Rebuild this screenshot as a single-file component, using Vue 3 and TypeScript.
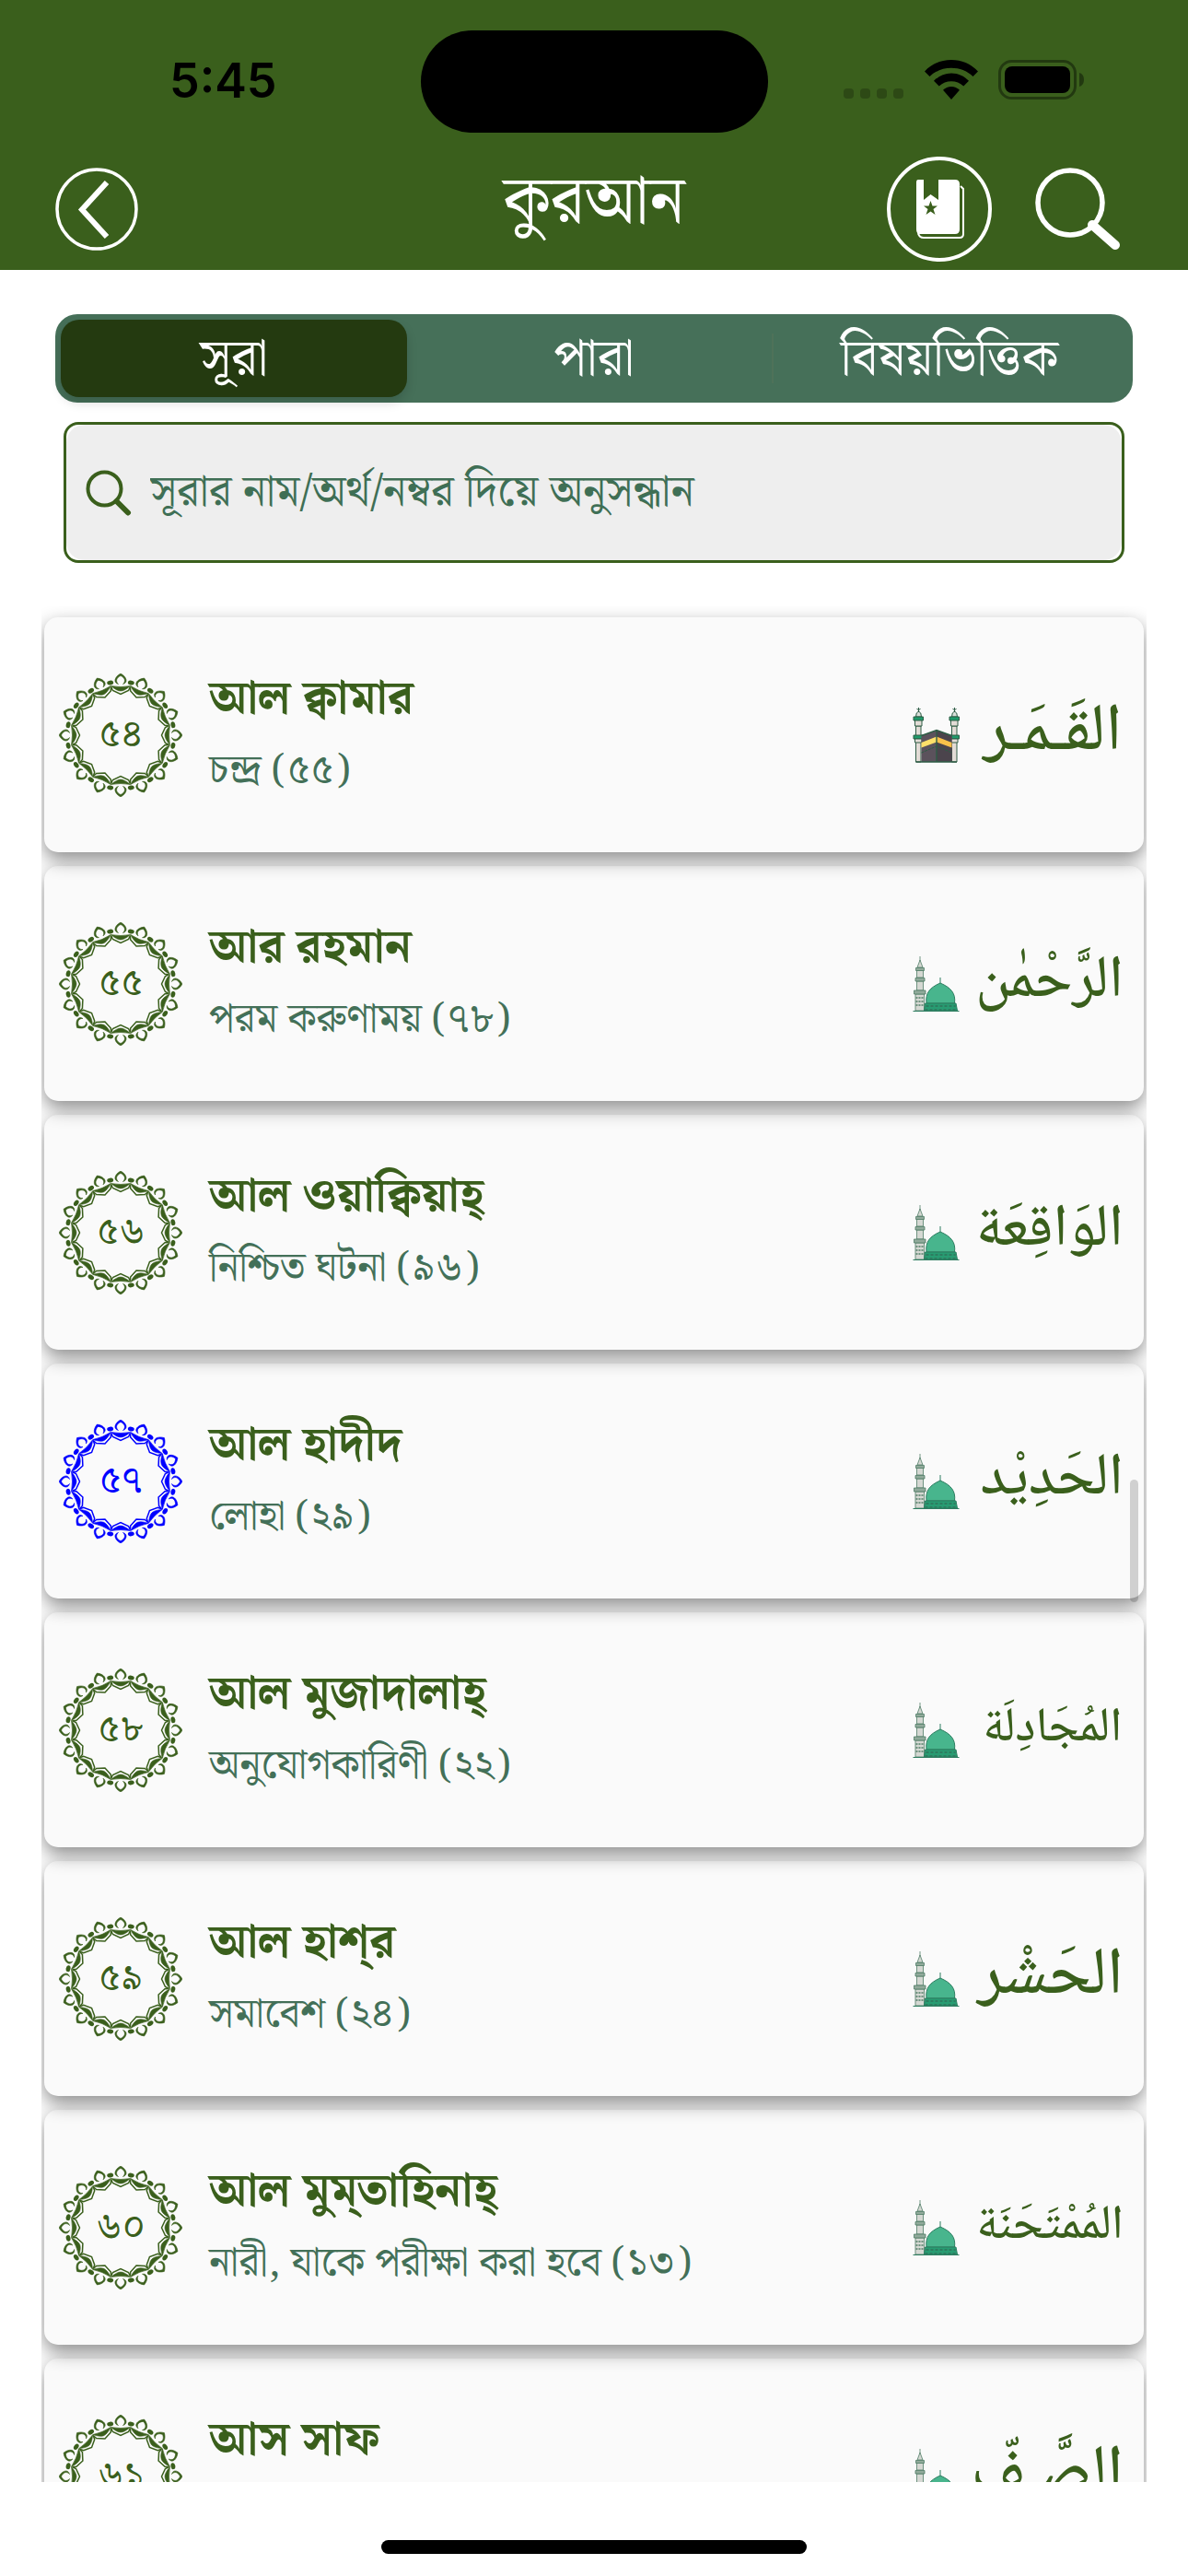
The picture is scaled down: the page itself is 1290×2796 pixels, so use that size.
<script setup lang="ts">
import { ref } from 'vue'

interface Sura {
  number: string
  name: string
  meaning?: string
  arabic: string
  arabicSize: 'small' | 'medium' | 'large'
  place: 'makkah' | 'madinah'
  current?: boolean
}

const tabs = ['সূরা', 'পারা', 'বিষয়ভিত্তিক']
const activeTab = ref(0)
const query = ref('')

const suras: Sura[] = [
  { number: '৫৪', name: 'আল ক্বামার', meaning: 'চন্দ্র (৫৫)', arabic: 'القَـمَـر', arabicSize: 'large', place: 'makkah' },
  { number: '৫৫', name: 'আর রহমান', meaning: 'পরম করুণাময় (৭৮)', arabic: 'الرَّحْمٰن', arabicSize: 'medium', place: 'madinah' },
  { number: '৫৬', name: 'আল ওয়াক্বিয়াহ্', meaning: 'নিশ্চিত ঘটনা (৯৬)', arabic: 'الوَاقِعَة', arabicSize: 'medium', place: 'madinah' },
  { number: '৫৭', name: 'আল হাদীদ', meaning: 'লোহা (২৯)', arabic: 'الحَدِيْد', arabicSize: 'medium', place: 'madinah', current: true },
  { number: '৫৮', name: 'আল মুজাদালাহ্', meaning: 'অনুযোগকারিণী (২২)', arabic: 'المُجَادِلَة', arabicSize: 'small', place: 'madinah' },
  { number: '৫৯', name: 'আল হাশ্‌র', meaning: 'সমাবেশ (২৪)', arabic: 'الحَشْر', arabicSize: 'large', place: 'madinah' },
  { number: '৬০', name: 'আল মুম্‌তাহিনাহ্', meaning: 'নারী, যাকে পরীক্ষা করা হবে (১৩)', arabic: 'المُمْتَحَنَة', arabicSize: 'small', place: 'madinah' },
  { number: '৬১', name: 'আস সাফ', arabic: 'الصَّـفّ', arabicSize: 'large', place: 'madinah' },
]

const petals = Array.from({ length: 16 }, (_, i) => i * 22.5)
</script>

<template>
  <div class="app">
    <header class="top">
      <div class="status">
        <time class="clock">5:45</time>
        <div class="island"></div>
        <div class="signals">
          <svg class="dots" width="66" height="12" viewBox="0 0 66 12" aria-hidden="true">
            <rect v-for="i in 4" :key="i" :x="(i - 1) * 18" y="0" width="11" height="11" rx="4" />
          </svg>
          <svg width="58" height="43" viewBox="0 0 58 43" aria-hidden="true">
            <path d="M29 0C40 0 50 4 58 12.500L52.500 18C46 11.800 38 8.800 29 8.800S12 11.800 5.500 18L0 12.500C8 4 18 0 29 0Z" />
            <path d="M29 14.500C36.500 14.500 42.800 17.500 48 22.800L42.300 28.500C38.500 25 34 23.200 29 23.200S19.500 25 15.700 28.500L10 22.800C15.200 17.500 21.500 14.500 29 14.500Z" />
            <path d="M29 29C32.500 29 35.500 30.300 38 32.800L29 43L20 32.800C22.500 30.300 25.500 29 29 29Z" />
          </svg>
          <svg width="94" height="43" viewBox="0 0 94 43" aria-hidden="true">
            <rect x="1.500" y="1.500" width="82" height="40" rx="13" fill="none" stroke="#000" stroke-opacity=".4" stroke-width="3" />
            <rect x="7" y="7" width="71" height="29" rx="8" />
            <path d="M88 14C91.500 15 93 18 93 21.500S91.500 28 88 29Z" fill-opacity=".4" />
          </svg>
        </div>
      </div>

      <div class="nav">
        <button class="icon-button back" type="button" aria-label="Back">
          <svg width="90" height="90" viewBox="0 0 90 90" fill="none" stroke="#fff">
            <circle cx="45" cy="45" r="43" stroke-width="3.500" />
            <path d="M56 16L29 45.500L56 75" stroke-width="6" />
          </svg>
        </button>
        <h1>কুরআন</h1>
        <div class="actions">
          <button class="icon-button" type="button" aria-label="Bookmarks">
            <svg width="114" height="114" viewBox="0 0 114 114">
              <circle cx="57" cy="57" r="55" fill="none" stroke="#fff" stroke-width="4" />
              <path d="M80 32L83 35V84Q83 88 79 88H40Q35 88 34 83" fill="none" stroke="#fff" stroke-width="2" />
              <path d="M34 25H40V47L47.500 41L56 47V25H74Q79 25 79 30V79Q79 84 74 84H36Q32 84 32 79V28Q32 25 34 25Z" fill="#fff" />
              <path d="M47.500 48L49.500 53.500H55L50.500 57L52.500 63L47.500 59.500L42.500 63L44.500 57L40 53.500H45.500Z" fill="#3a5f1c" />
            </svg>
          </button>
          <button class="icon-button" type="button" aria-label="Search">
            <svg width="94" height="90" viewBox="0 0 94 90" fill="none" stroke="#fff">
              <circle cx="38" cy="38" r="35" stroke-width="5.500" />
              <path d="M62 62L87 84" stroke-width="10" stroke-linecap="round" />
            </svg>
          </button>
        </div>
      </div>
    </header>

    <main class="content">
      <nav class="segments">
        <button
          v-for="(tab, i) in tabs"
          :key="tab"
          type="button"
          class="segment"
          :class="{ active: activeTab === i, divided: i === 2 && activeTab === 0 }"
          @click="activeTab = i"
        >{{ tab }}</button>
      </nav>

      <div class="search">
        <label class="search-inner">
          <svg width="50" height="50" viewBox="0 0 50 50" fill="none" stroke="#3a5f1c" aria-hidden="true">
            <circle cx="20.500" cy="20.500" r="18" stroke-width="4" />
            <path d="M33.500 34L46 46.500" stroke-width="6" stroke-linecap="round" />
          </svg>
          <input v-model="query" type="text" aria-label="অনুসন্ধান" placeholder="সূরার নাম/অর্থ/নম্বর দিয়ে অনুসন্ধান" />
        </label>
      </div>

      <div class="list-frame">
        <ul class="list">
          <li
            v-for="(sura, i) in suras"
            :key="sura.number"
            class="card"
            :style="{ zIndex: suras.length - i }"
          >
            <div class="badge" :class="{ current: sura.current }">
              <svg viewBox="-67 -67 134 134" fill="none" stroke="currentColor" aria-hidden="true">
                <g v-for="angle in petals" :key="angle" :transform="`rotate(${angle})`">
                  <path d="M-2.500 -55.500C-8.500 -57 -6.500 -63.500 0 -67C6.500 -63.500 8.500 -57 2.500 -55.500C6 -58.500 4.500 -62.500 0 -64.500C-4.500 -62.500 -6 -58.500 -2.500 -55.500Z" fill="currentColor" stroke-width=".600" />
                  <path d="M-10.500 -53.500Q0 -51.500 10.500 -53.500Q4 -48 0 -48Q-4 -48 -10.500 -53.500Z" fill="currentColor" stroke-width=".600" />
                  <path d="M-10.500 -52.500L-8.500 -48.500L0 -44.500L8.500 -48.500L10.500 -52.500" stroke-width="1.500" />
                  <ellipse cx="0" cy="-58" rx="3.500" ry="2.400" transform="rotate(11.250)" fill="currentColor" stroke="none" />
                </g>
              </svg>
              <span>{{ sura.number }}</span>
            </div>
            <div class="text">
              <h2>{{ sura.name }}</h2>
              <p>{{ sura.meaning }}</p>
            </div>
            <svg v-if="sura.place === 'makkah'" class="place" viewBox="0 0 50 60" aria-hidden="true">
              <g stroke="#2e5c45" stroke-width="1">
                <path d="M3 20H8.500V59H3ZM42 20H47.500V59H42Z" fill="#e3dcd6" />
                <path d="M2 12H9.500V20H2ZM41 12H48.500V20H41Z" fill="#e3dcd6" />
                <path d="M3 10Q3 5 6 4Q9 5 9 10ZM42 10Q42 5 45 4Q48 5 48 10Z" fill="#d9ded9" />
                <path d="M.500 10H11V14H.500ZM39.500 10H50V14H39.500ZM.500 30H11V34H.500ZM39.500 30H50V34H39.500Z" fill="#1f9a6b" />
                <path d="M2 34H9.500V38H2ZM41 34H48.500V38H41Z" fill="#e3dcd6" />
                <path d="M6 5V0M45 5V0M4 1L6 3L8 1M43 1L45 3L47 1" fill="none" />
              </g>
              <path d="M25.500 24.500L42 30.500V59H9V30.500Z" fill="#5b525c" />
              <path d="M25.500 24.500L42 30.500V59H25.500Z" fill="#4b444c" />
              <path d="M9 38L25.500 31.500V37.500L9 43.500Z" fill="#ffe06a" />
              <path d="M25.500 31.500L42 38V43.500L25.500 37.500Z" fill="#f9c14a" />
              <path d="M9 49L25.500 42L42 49" fill="none" stroke="#2e5c45" stroke-dasharray="3 1" />
              <path d="M9 30.500L25.500 24.500L42 30.500M25.500 24.500V59M3 59H47.500" fill="none" stroke="#2e5c45" stroke-width="1.400" />
            </svg>
            <svg v-else class="place" viewBox="0 0 50 60" aria-hidden="true">
              <g fill="#d5d8d3" stroke="#4f7c66" stroke-width=".800">
                <path d="M7.500 5V0" />
                <path d="M4.500 12L7.500 4L10.500 12ZM4 15H11V23H4ZM4 27H11V37H4ZM2.500 41H12V59H2.500Z" />
                <path d="M3 12.500H12V15.500H3ZM2.500 23.500H12.500V27H2.500ZM1 37H13.500V41H1Z" fill="#91aa9b" />
                <path d="M3 45H12M3 49H12M3 53H12" stroke-width="1.400" stroke-dasharray="2 1" />
              </g>
              <g fill="#48b58d" stroke="#2d7d60" stroke-width="1">
                <path d="M29.500 30V23" />
                <path d="M14.500 51C13 40 18 34 29.500 29C41 34 46.500 40 45 51Z" />
                <path d="M13 51H46.500L48 59H12Z" fill="#289c72" />
                <path d="M14 54H46M13 58H47" stroke-width="2" stroke-dasharray="3 2" />
              </g>
              <path d="M0 59.500H50" stroke="#2d7d60" />
            </svg>
            <div class="arabic" :class="sura.arabicSize" lang="ar" dir="rtl">{{ sura.arabic }}</div>
          </li>
        </ul>
        <div class="scroll-thumb"></div>
      </div>
    </main>

    <footer class="bottom"><div class="home-bar"></div></footer>
  </div>
</template>

<style>
body {
  margin: 0;
  background: #fff;
}
</style>

<style scoped>
* {
  box-sizing: border-box;
}
.app {
  display: flex;
  flex-direction: column;
  height: 100vh;
  overflow: hidden;
  background: #fff;
  color: #3a5f1c;
  font-family: "Kalpurush", "SolaimanLipi", "Noto Serif Bengali", "Noto Sans Bengali", "Liberation Serif", serif;
}
button {
  font: inherit;
}
.top {
  background: #3a5f1c;
  padding: 33px 60px 0;
  height: 293px;
  flex: none;
}
.status {
  display: grid;
  grid-template-columns: 1fr 377px 1fr;
  height: 111px;
}
.clock {
  justify-self: center;
  margin: 23px 32px 0 0;
  font: 600 52px/64px Inter, sans-serif;
  color: #000;
}
.island {
  background: #000;
  border-radius: 56px;
}
.signals {
  display: flex;
  align-items: flex-end;
  justify-content: flex-end;
  gap: 22px;
  height: 75px;
  padding-right: 52px;
}
.dots {
  fill: #000;
  opacity: .22;
}
.nav {
  display: grid;
  grid-template-columns: 1fr auto 1fr;
  align-items: center;
  height: 114px;
  margin-top: 26px;
}
h1 {
  margin: 0;
  color: #fff;
  font-size: 73px;
  font-weight: 400;
  line-height: 100px;
  padding-bottom: 12px;
}
.icon-button {
  display: block;
  padding: 0;
  border: 0;
  background: none;
}
.icon-button svg {
  display: block;
}
.actions {
  display: flex;
  align-items: center;
  justify-content: flex-end;
  gap: 47px;
  padding-right: 12px;
}
.content {
  display: flex;
  flex-direction: column;
  flex: 1;
  min-height: 0;
  padding-top: 48px;
}
.segments {
  display: grid;
  grid-template-columns: repeat(3, 1fr);
  flex: none;
  height: 96px;
  margin: 0 60px;
  padding: 6px;
  border-radius: 24px;
  background: #467059;
}
.segment {
  padding: 3px 0 0;
  border: 0;
  border-radius: 20px;
  background: none;
  color: #fff;
  font-size: 56px;
  line-height: 80px;
}
.segment.active {
  background: #243a10;
  margin-right: 10px;
  box-shadow: 0 6px 12px rgba(0, 0, 0, .15);
}
.segment.divided {
  border-radius: 0;
  background: linear-gradient(#4f7259, #4f7259) 0 50% / 2px 54px no-repeat;
}
.search {
  flex: none;
  margin: 21px 69px 0;
  border: 3px solid #3a5f1c;
  border-radius: 16px;
}
.search-inner {
  display: flex;
  align-items: center;
  gap: 20px;
  height: 147px;
  padding: 0 21px;
  border-radius: 20px;
  background: #eee;
}
.search-inner svg {
  flex: none;
}
input {
  flex: 1;
  min-width: 0;
  height: 100px;
  padding: 0;
  border: 0;
  outline: 0;
  background: none;
  color: #3f6f55;
  font-family: inherit;
  font-size: 48px;
}
input::placeholder {
  color: #3f6f55;
  opacity: 1;
}
.list-frame {
  position: relative;
  flex: 1;
  min-height: 0;
  margin: 47px 45px 0;
  overflow: hidden;
}
.list {
  display: flex;
  flex-direction: column;
  gap: 15px;
  margin: 0;
  padding: 12px 3px;
  list-style: none;
}
.card {
  position: relative;
  display: flex;
  align-items: center;
  height: 255px;
  padding: 0 22px 0 16px;
  border-radius: 15px;
  background: #fafafa;
  box-shadow: 0 8px 20px rgba(0, 0, 0, .45);
}
.badge {
  display: grid;
  place-items: center;
  flex: none;
  width: 134px;
  height: 134px;
}
.badge > * {
  grid-area: 1 / 1;
}
.badge svg {
  width: 134px;
  height: 134px;
}
.badge span {
  font-size: 42px;
  line-height: 60px;
}
.current {
  color: #00f;
}
.text {
  flex: 1;
  min-width: 0;
  padding-left: 29px;
}
h2,
p {
  margin: 0;
  white-space: nowrap;
}
h2 {
  font-size: 51px;
  font-weight: 700;
  line-height: 80px;
}
p {
  height: 78px;
  color: #437058;
  font-size: 44px;
  line-height: 76px;
}
.place {
  flex: none;
  width: 51px;
  height: 60px;
}
.arabic {
  flex: none;
  width: 154px;
  margin-left: 24px;
  font-family: "Noto Naskh Arabic", "Amiri", "DejaVu Sans", serif;
  font-weight: 500;
  line-height: 100px;
  text-align: center;
  white-space: nowrap;
}
.small {
  font-size: 52px;
}
.medium {
  font-size: 64px;
}
.large {
  font-size: 72px;
}
.scroll-thumb {
  position: absolute;
  z-index: 20;
  top: 948px;
  right: 9px;
  width: 9px;
  height: 133px;
  border-radius: 5px;
  background: rgba(0, 0, 0, .17);
}
.bottom {
  display: flex;
  justify-content: center;
  flex: none;
  height: 102px;
  padding-top: 63px;
}
.home-bar {
  width: 462px;
  height: 15px;
  border-radius: 8px;
  background: #000;
}
</style>
